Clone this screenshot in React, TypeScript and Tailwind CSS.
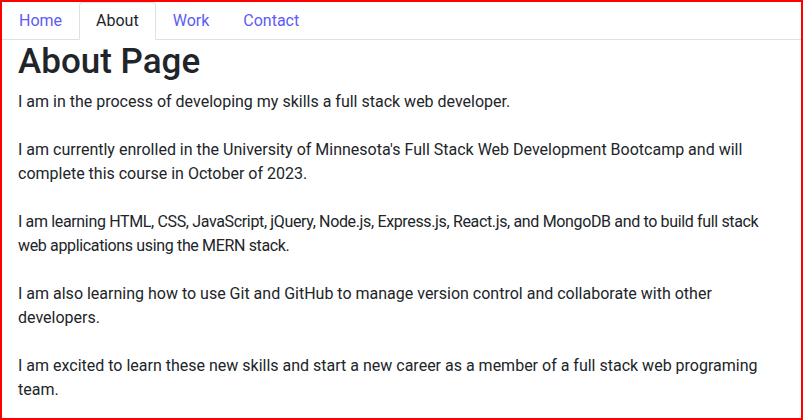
const tabs = [
  { label: "Home", active: false },
  { label: "About", active: true },
  { label: "Work", active: false },
  { label: "Contact", active: false },
];

const paragraphs = [
  { text: "I am in the process of developing my skills a full stack web developer.", tight: false },
  {
    text: "I am currently enrolled in the University of Minnesota's Full Stack Web Development Bootcamp and will complete this course in October of 2023.",
    tight: false,
  },
  {
    text: "I am learning HTML, CSS, JavaScript, jQuery, Node.js, Express.js, React.js, and MongoDB and to build full stack web applications using the MERN stack.",
    tight: true,
  },
  {
    text: "I am also learning how to use Git and GitHub to manage version control and collaborate with other developers.",
    tight: false,
  },
  {
    text: "I am excited to learn these new skills and start a new career as a member of a full stack web programing team.",
    tight: false,
  },
];

export default function App() {
  return (
    <div className="h-[420px] w-full overflow-hidden border-2 border-[#ff0000] bg-white font-['Roboto',sans-serif] text-[16px] leading-6 text-[#212529]">
      {/* Tabs */}
      <nav className="flex border-b border-[#dee2e6]">
        {tabs.map((tab) => (
          <a
            key={tab.label}
            href="#"
            className={
              tab.active
                ? "-mb-px rounded-t-[4px] border border-[#dee2e6] border-b-white bg-white px-4 py-[6px] text-[#212529]"
                : "-mb-px rounded-t-[4px] border border-transparent px-4 py-[6px] text-[#5c5cf5]"
            }
          >
            {tab.label}
          </a>
        ))}
      </nav>

      <main className="pl-4 pr-3">
        <h1 className="mb-2 mt-[2px] text-[35px] font-medium leading-[40px]">About Page</h1>
        {paragraphs.map((p) => (
          <p key={p.text.slice(0, 24)} className={p.tight ? "mb-6 tracking-[-0.35px]" : "mb-6"}>
            {p.text}
          </p>
        ))}
      </main>
    </div>
  );
}
